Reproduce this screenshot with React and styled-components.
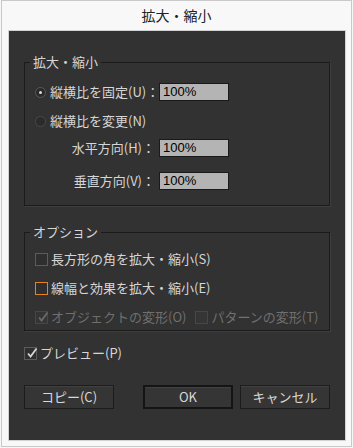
import React from 'react';
import styled, { createGlobalStyle } from 'styled-components';

const GlobalStyle = createGlobalStyle`
  html, body {
    margin: 0;
    padding: 0;
    background: #f7f7f7;
  }
  body {
    font-family: "Noto Sans CJK JP", "Noto Sans", sans-serif;
  }
`;

const Window = styled.div`
  box-sizing: border-box;
  width: 351px;
  height: 447px;
  margin-left: 1px;
  border: 1px solid #c9c9c9;
  background: #f8f8f8;
  display: flex;
  flex-direction: column;
`;

const TitleBar = styled.div`
  height: 29px;
  display: flex;
  align-items: center;
  justify-content: center;
  font-size: 14px;
  color: #222;
  padding-bottom: 1px;
  box-sizing: border-box;
`;

const Panel = styled.div`
  box-sizing: border-box;
  margin: 0 5px 5px 6px;
  height: 411px;
  background: #323232;
  border: 1px solid #d2d2d2;
  padding: 23px 15px 0 15px;
  color: #d6d6d6;
  font-size: 13px;
  line-height: 16px;
`;

const Group = styled.fieldset`
  margin: ${p => p.$top || 0}px 0 0 0;
  padding: ${p => p.$pt}px 0 ${p => p.$pb}px 10px;
  border: 1px solid #1b1b1b;
  box-shadow: 1px 1px 0 #3e3e3e;
  min-width: 0;
`;

const Legend = styled.legend`
  margin-left: -5px;
  padding: 0 3px;
  height: 16px;
  line-height: 16px;
  color: #d6d6d6;
`;

const FieldRow = styled.div`
  display: grid;
  grid-template-columns: 120px 70px;
  column-gap: 4px;
  align-items: center;
  height: 18px;
  margin-top: ${p => p.$top || 0}px;
`;

const Label = styled.span`
  display: flex;
  align-items: center;
  justify-content: ${p => (p.$right ? 'flex-end' : 'flex-start')};
  white-space: nowrap;
`;

const Radio = styled.span`
  box-sizing: border-box;
  width: 11px;
  height: 11px;
  border-radius: 50%;
  border: 1px solid ${p => (p.$on ? '#5a5a5a' : '#4a4a4a')};
  background: ${p => (p.$on ? '#2a2a2a' : '#2b2b2b')};
  display: inline-flex;
  align-items: center;
  justify-content: center;
  margin-right: 4px;
  flex: none;

  &::after {
    content: '';
    width: 3px;
    height: 3px;
    border-radius: 50%;
    background: ${p => (p.$on ? '#dcdcdc' : 'transparent')};
  }
`;

const TextField = styled.div`
  box-sizing: border-box;
  width: 70px;
  height: 18px;
  background: #b4b4b4;
  border: 1px solid #1a1a1a;
  color: #000;
  font-family: "Liberation Sans", Arial, sans-serif;
  font-size: 13px;
  line-height: 16px;
  padding-left: 3px;
`;

const CheckRow = styled.div`
  display: flex;
  align-items: center;
  height: 16px;
  margin-top: ${p => p.$top || 0}px;
  color: ${p => (p.$disabled ? '#6f6f6f' : '#d6d6d6')};
  white-space: nowrap;
`;

const CheckItem = styled.span`
  display: inline-flex;
  align-items: center;
  margin-left: ${p => p.$left || 0}px;
`;

const Box = styled.span`
  box-sizing: border-box;
  width: 13px;
  height: 13px;
  border: 1px solid ${p => (p.$focus ? '#e8821e' : p.$disabled ? '#474747' : '#5c5c5c')};
  background: ${p => (p.$disabled ? '#353535' : '#2f2f2f')};
  margin-right: 3px;
  position: relative;
  flex: none;

  svg {
    position: absolute;
    left: 1px;
    top: -1px;
  }
`;

const Check = ({ color }) => (
  <svg width="12" height="12" viewBox="0 0 12 12">
    <path d="M2 6.5 L4.6 9.5 L10.5 1.5" fill="none" stroke={color} strokeWidth="1.8" />
  </svg>
);

const ButtonRow = styled.div`
  display: flex;
  gap: 7px;
  margin-top: 24px;
`;

const Button = styled.div`
  box-sizing: border-box;
  width: 90px;
  height: 24px;
  display: flex;
  align-items: center;
  justify-content: center;
  background: #353535;
  border: ${p => (p.$primary ? '2px solid #141414' : '1px solid #1c1c1c')};
  box-shadow: inset 0 1px 0 #414141;
  color: #d8d8d8;
  font-size: 13px;
  margin-right: ${p => (p.$push ? 'auto' : '0')};
`;

export default function App() {
  return (
    <>
      <GlobalStyle />
      <Window>
        <TitleBar>拡大・縮小</TitleBar>
        <Panel>
          <Group $pt={13} $pb={15}>
            <Legend>拡大・縮小</Legend>
            <FieldRow>
              <Label><Radio $on />縦横比を固定(U)：</Label>
              <TextField>100%</TextField>
            </FieldRow>
            <FieldRow $top={11}>
              <Label><Radio />縦横比を変更(N)</Label>
            </FieldRow>
            <FieldRow $top={9}>
              <Label $right>水平方向(H)：</Label>
              <TextField>100%</TextField>
            </FieldRow>
            <FieldRow $top={15}>
              <Label $right>垂直方向(V)：</Label>
              <TextField>100%</TextField>
            </FieldRow>
          </Group>

          <Group $top={18} $pt={11} $pb={5}>
            <Legend>オプション</Legend>
            <CheckRow>
              <Box />長方形の角を拡大・縮小(S)
            </CheckRow>
            <CheckRow $top={13}>
              <Box $focus />線幅と効果を拡大・縮小(E)
            </CheckRow>
            <CheckRow $top={13} $disabled>
              <CheckItem>
                <Box $disabled><Check color="#6a6a6a" /></Box>オブジェクトの変形(O)
              </CheckItem>
              <CheckItem $left={9}>
                <Box $disabled />パターンの変形(T)
              </CheckItem>
            </CheckRow>
          </Group>

          <CheckRow $top={14}>
            <Box><Check color="#d6d6d6" /></Box>プレビュー(P)
          </CheckRow>

          <ButtonRow>
            <Button $push>コピー(C)</Button>
            <Button $primary>OK</Button>
            <Button>キャンセル</Button>
          </ButtonRow>
        </Panel>
      </Window>
    </>
  );
}
